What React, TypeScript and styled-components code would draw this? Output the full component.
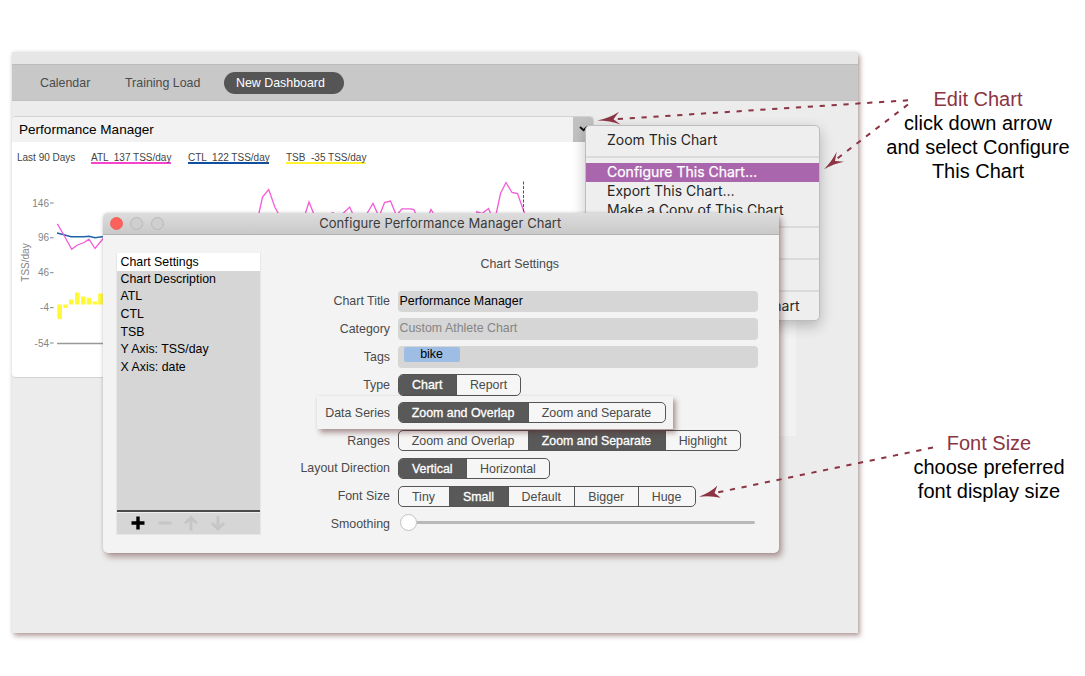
import React from "react";
import styled, { createGlobalStyle, css } from "styled-components";

const SANS = '"Liberation Sans", Arial, Helvetica, sans-serif';
const SYSTEM = 'Inter, Roboto, sans-serif';
const MAROON = "#8b3443";

const GlobalStyle = createGlobalStyle`
  * { box-sizing: border-box; }
  body { margin: 0; background: #fff; font-family: ${SANS}; color: #000; }
`;

const Page = styled.div`
  position: relative;
  display: flex;
  width: 1085px;
  height: 676px;
  padding: 52px 0 0 12px;
  overflow: hidden;
`;

const AppWindow = styled.div`
  display: flex;
  flex-direction: column;
  flex: none;
  width: 846px;
  height: 581px;
  background: #ececec;
  box-shadow: 2px 3px 5px rgba(85, 35, 35, 0.42), 0 0 4px rgba(0, 0, 0, 0.08);
`;

const WindowTop = styled.div`
  height: 12px;
  background: #e6e6e6;
`;

const TabBar = styled.nav`
  display: flex;
  align-items: center;
  height: 37px;
  padding-left: 28px;
  background: #c8c8c8;
  border-top: 1px solid #bcbcbc;
  border-bottom: 1px solid #c0c0c0;
  font-size: 12.4px;
  color: #4b4b4b;
`;

const Tab = styled.span<{ $width: number }>`
  width: ${(p) => p.$width}px;
  white-space: nowrap;
`;

const ActiveTab = styled.span`
  width: 120.5px;
  height: 22px;
  padding-left: 12.5px;
  border-radius: 11px;
  background: #555;
  color: #fff;
  line-height: 22px;
  white-space: nowrap;
`;

const Panels = styled.div`
  display: flex;
  align-items: flex-start;
  padding-top: 15px;
`;

const ChartPanel = styled.section`
  width: 582px;
  height: 261.5px;
  background: #fff;
  border: 1px solid #d2d2d2;
  border-left: 0;
  border-radius: 4px;
  overflow: hidden;
`;

const NextPanel = styled.section`
  width: 201.5px;
  height: 170px;
  margin-top: 150px;
  background: #f2f2f2;
`;

const PanelHeader = styled.header`
  display: flex;
  justify-content: space-between;
  height: 24.5px;
  background: #f2f2f2;
  font-size: 13.55px;
  line-height: 26px;
  padding-left: 7px;
`;

const MenuButton = styled.span`
  display: flex;
  align-items: center;
  justify-content: center;
  width: 20px;
  background: #c1c1c1;
`;

const Legend = styled.div`
  display: flex;
  height: 27px;
  padding: 9px 0 0 5px;
  font-size: 10px;
  line-height: 14px;
  color: #444;
  white-space: pre;
`;

const LegendItem = styled.span<{ $width: number; $color?: string; $gap?: number }>`
  width: ${(p) => p.$width}px;
  height: 13.5px;
  margin-right: ${(p) => p.$gap ?? 17}px;
  border-bottom: 2px solid ${(p) => p.$color ?? "transparent"};
`;

const ContextMenu = styled.div`
  position: absolute;
  left: 585px;
  top: 125px;
  width: 234.5px;
  height: 196px;
  padding-top: 5px;
  background: #eee;
  border: 1px solid #bdbdbd;
  border-radius: 5px;
  box-shadow: 0 5px 14px rgba(0, 0, 0, 0.24);
  font-family: ${SYSTEM};
  font-size: 14px;
  color: #262626;
`;

const MenuItem = styled.div<{ $active?: boolean; $end?: boolean; $spacing?: number }>`
  display: flex;
  justify-content: ${(p) => (p.$end ? "flex-end" : "flex-start")};
  height: 19.3px;
  padding: 0 19px 0 21px;
  line-height: 17.3px;
  letter-spacing: ${(p) => p.$spacing ?? 0}px;
  white-space: nowrap;
  ${(p) => p.$active && css`background: #aa66ac; color: #fff; -webkit-text-stroke: 0.25px #fff;`}
`;

const Separator = styled.div`
  height: 2px;
  margin: 5.4px 0 5.1px;
  background: #dadada;
`;

const Dialog = styled.div`
  position: absolute;
  left: 103px;
  top: 213px;
  width: 676px;
  height: 340px;
  background: #f3f3f3;
  border-radius: 5px;
  box-shadow: 3px 4px 6px rgba(85, 35, 35, 0.42), 0 0 3px rgba(0, 0, 0, 0.15);
`;

const TitleBar = styled.header`
  display: flex;
  align-items: center;
  gap: 7.4px;
  height: 22px;
  padding-left: 7px;
  border-radius: 5px 5px 0 0;
  background: linear-gradient(#dddddd, #c9c9c9);
  border-bottom: 1px solid #b2b2b2;
`;

const Light = styled.span<{ $close?: boolean }>`
  flex: none;
  width: 13px;
  height: 13px;
  border-radius: 50%;
  background: ${(p) => (p.$close ? "#fc625b" : "#cfcfcf")};
  border: 1px solid ${(p) => (p.$close ? "#f3625c" : "#b9b9b9")};
`;

const DialogTitle = styled.h1`
  margin: 0 0 0 148px;
  font: 400 13px/21px ${SYSTEM};
  letter-spacing: 0.07px;
  color: #3b3b3b;
  white-space: nowrap;
`;

const DialogBody = styled.div`
  display: flex;
`;

const Sidebar = styled.aside`
  display: flex;
  flex-direction: column;
  flex: none;
  width: 144.5px;
  height: 282px;
  margin: 17.5px 0 0 13px;
  background: #d6d6d6;
  border: 1px solid #e6e6e6;
  border-top: 0;
  font-size: 12.35px;
`;

const SidebarItem = styled.div<{ $selected?: boolean }>`
  height: 17.55px;
  padding-left: 3.5px;
  line-height: 17.2px;
  white-space: nowrap;
  ${(p) => p.$selected && css`height: 18.4px; line-height: 18.6px; background: #fff;`}
`;

const SidebarTools = styled.div`
  display: flex;
  align-items: center;
  gap: 8.6px;
  height: 23.5px;
  margin-top: auto;
  padding-left: 12px;
  border-top: 2px solid #4a4a4c;
  box-shadow: inset 0 1px #eee;
`;

const Form = styled.div`
  display: flex;
  flex-direction: column;
  flex: none;
  gap: 5.85px;
  width: 500px;
  padding-top: 19px;
  font-size: 12.4px;
  color: #4a4a4a;
`;

const FormHeading = styled.h2`
  height: 22px;
  margin: 0 0 8.5px 220px;
  font: 400 12.4px/20px ${SANS};
`;

const FieldRow = styled.div<{ $raised?: boolean }>`
  display: flex;
  align-items: center;
  height: 22px;
  padding-left: 29px;
  white-space: nowrap;
  ${(p) => p.$raised && css`
    position: relative;
    width: 356px;
    height: 33px;
    margin: -5.5px 0 -5.5px 56.5px;
    padding-left: 0;
    background: #f3f3f3;
    box-shadow: 3px 4px 5px rgba(85, 35, 35, 0.42), 0 0 3px rgba(0, 0, 0, 0.08);
  `}
`;

const FieldLabel = styled.label<{ $width?: number }>`
  flex: none;
  width: ${(p) => p.$width ?? 100.5}px;
  margin-right: 7.5px;
  text-align: right;
`;

const Field = styled.div<{ $muted?: boolean }>`
  display: flex;
  flex: none;
  width: 360px;
  height: 21.5px;
  padding-left: 2px;
  background: #d6d6d6;
  border-radius: 4px;
  line-height: 21px;
  color: ${(p) => (p.$muted ? "#858585" : "#000")};
`;

const Tag = styled.span`
  width: 56px;
  height: 15px;
  margin: 0.5px 0 0 4px;
  border-radius: 2px;
  background: #9dbde4;
  line-height: 15px;
  text-align: center;
`;

const Segments = styled.div`
  display: flex;
  flex: none;
  height: 21.5px;
  border: 1px solid #555;
  border-radius: 5px;
  overflow: hidden;
  background: #f6f6f6;
`;

const Segment = styled.span<{ $width: number; $on?: boolean }>`
  flex: none;
  width: ${(p) => p.$width}px;
  line-height: 20px;
  text-align: center;
  & + & { border-left: 1px solid #555; }
  ${(p) => p.$on && css`background: #595959; color: #fff; -webkit-text-stroke: 0.3px #fff;`}
`;

const Slider = styled.div`
  display: flex;
  align-items: center;
  flex: none;
  width: 360px;
  padding: 0 3px 3px 2px;
`;

const Knob = styled.span`
  flex: none;
  width: 17px;
  height: 17px;
  border-radius: 50%;
  background: #fff;
  border: 1px solid #c2c2c2;
`;

const Track = styled.span`
  flex: 1;
  height: 3px;
  border-radius: 0 2px 2px 0;
  background: #b8b8b8;
`;

const Notes = styled.aside`
  display: flex;
  flex-direction: column;
  width: 227px;
  padding: 35px 0 0 13px;
  gap: 248px;
  font-size: 20px;
  line-height: 24px;
  text-align: center;
`;

const Note = styled.p<{ $shift?: number }>`
  margin: 0;
  padding-left: ${(p) => p.$shift ?? 0}px;
  white-space: pre-line;
`;

const NoteTitle = styled.span`
  color: ${MAROON};
`;

const Arrows = styled.svg`
  position: absolute;
  left: 0;
  top: 0;
`;

const ChartSvg = styled.svg`
  display: block;
`;

const bars = [
  [57.3, 304, 14.7], [63.3, 304, 3.4], [69, 299, 5], [75, 292, 12],
  [81, 296, 8], [86.7, 297.4, 6.6], [92.7, 301, 3], [98.2, 293, 11],
];

const ticks: [string, number][] = [
  ["146", 202.5], ["96", 237.3], ["46", 272.2], ["-4", 307.2], ["-54", 342.5],
];

const sections = ["Chart Settings", "Chart Description", "ATL", "CTL", "TSB", "Y Axis: TSS/day", "X Axis: date"];

type Option = [string, number, boolean?];
const choices: { label: string; raised?: boolean; options: Option[] }[] = [
  { label: "Type", options: [["Chart", 57.5, true], ["Report", 64]] },
  { label: "Data Series", raised: true, options: [["Zoom and Overlap", 129, true], ["Zoom and Separate", 137]] },
  { label: "Ranges", options: [["Zoom and Overlap", 129], ["Zoom and Separate", 137, true], ["Highlight", 75.5]] },
  { label: "Layout Direction", options: [["Vertical", 67.5, true], ["Horizontal", 83]] },
  { label: "Font Size", options: [["Tiny", 50], ["Small", 59, true], ["Default", 66.5], ["Bigger", 63.5], ["Huge", 57]] },
];

function PerformanceChart() {
  return (
    <ChartSvg width="582" height="209" viewBox="12 168.5 582 209">
      <g fontFamily={SANS} fontSize="10" fill="#858585">
        {ticks.map(([label, y]) => (
          <g key={label}>
            <text x="49" y={y + 3.6} textAnchor="end">{label}</text>
            <path d={`M50 ${y}h3.6`} stroke="#858585" />
          </g>
        ))}
        <text transform="translate(29.3 262) rotate(-90)" textAnchor="middle">TSS/day</text>
      </g>
      <path d="M57 343H110" stroke="#999" strokeWidth="1.5" />
      {bars.map(([x, y, h]) => (
        <rect key={x} x={x} y={y} width="4.6" height={h} fill="#fff935" />
      ))}
      <path d="M57 232.5 63 234 71 236.3H84L89 235.7 95 237.3 104 236" fill="none" stroke="#1f63ab" strokeWidth="1.5" />
      <path
        d="M57.3 223.3 63 233 71.7 248.7 77 244.7 84 242 89 238.7 95 248 104 237 M258.7 214 262.5 196.5 268.7 189 275 207 279 214 M305 214 309 201.5 314 214 M328 214 333 212.3 335 214 M343 213 349.7 206.5 353 214 M367 213 373 203 378 214 M380 214 384.5 202 390.5 200.5 396 214 M398 213 402 208.3H411L414 209.3 416 214 M429 214 431 209 434 214 M476 214 477 211 482 213 488.5 208 491 214 M496 214 500.5 193 506 182 512 192 517.5 193 525 214"
        fill="none" stroke="#f55ad7" strokeWidth="1.3"
      />
      <path d="M523.5 181V214" stroke="#555" strokeDasharray="3 1.5" />
    </ChartSvg>
  );
}

export default function App() {
  return (
    <>
      <GlobalStyle />
      <Page>
        <AppWindow>
          <WindowTop />
          <TabBar>
            <Tab $width={85}>Calendar</Tab>
            <Tab $width={98.5}>Training Load</Tab>
            <ActiveTab>New Dashboard</ActiveTab>
          </TabBar>
          <Panels>
            <ChartPanel>
              <PanelHeader>
                Performance Manager
                <MenuButton>
                  <svg width="9" height="6" viewBox="0 0 9 6" fill="none" stroke="#111" strokeWidth="1.9">
                    <path d="M1 1 4.5 4.3 8 1" />
                  </svg>
                </MenuButton>
              </PanelHeader>
              <Legend>
                <LegendItem $width={58} $gap={16}>Last 90 Days</LegendItem>
                <LegendItem $width={80} $color="#f744cf">ATL  137 TSS/day</LegendItem>
                <LegendItem $width={81} $color="#0f4fa0">CTL  122 TSS/day</LegendItem>
                <LegendItem $width={80} $color="#fff32e">TSB  -35 TSS/day</LegendItem>
              </Legend>
              <PerformanceChart />
            </ChartPanel>
            <NextPanel />
          </Panels>
        </AppWindow>

        <Notes>
          <Note>
            <NoteTitle>Edit Chart</NoteTitle>
            {"\nclick down arrow\nand select Configure\nThis Chart"}
          </Note>
          <Note $shift={22}>
            <NoteTitle>Font Size</NoteTitle>
            {"\nchoose preferred\nfont display size"}
          </Note>
        </Notes>

        <ContextMenu>
          <MenuItem>Zoom This Chart</MenuItem>
          <Separator />
          <MenuItem $active>Configure This Chart…</MenuItem>
          <MenuItem>Export This Chart…</MenuItem>
          <MenuItem>Make a Copy of This Chart</MenuItem>
          <Separator />
          <MenuItem />
          <Separator />
          <MenuItem />
          <Separator />
          <MenuItem $end>Chart</MenuItem>
        </ContextMenu>

        <Dialog>
          <TitleBar>
            <Light $close />
            <Light />
            <Light />
            <DialogTitle>Configure Performance Manager Chart</DialogTitle>
          </TitleBar>
          <DialogBody>
            <Sidebar>
              {sections.map((name, i) => (
                <SidebarItem key={name} $selected={i === 0}>{name}</SidebarItem>
              ))}
              <SidebarTools>
                <svg width="18" height="18" viewBox="0 0 18 18" stroke="#000" strokeWidth="3.4"><path d="M2.5 9h13M9 2.5v13" /></svg>
                <svg width="18" height="18" viewBox="0 0 18 18" stroke="#c6c6c6" strokeWidth="3.2"><path d="M2.5 9h13" /></svg>
                <svg width="18" height="18" viewBox="0 0 18 18" stroke="#c6c6c6" strokeWidth="3" fill="none"><path d="M9 16.5V4M3 9.5 9 3.5 15 9.5" /></svg>
                <svg width="18" height="18" viewBox="0 0 18 18" stroke="#c6c6c6" strokeWidth="3" fill="none"><path d="M9 2v12.5M3 9 9 15 15 9" /></svg>
              </SidebarTools>
            </Sidebar>
            <Form>
              <FormHeading>Chart Settings</FormHeading>
              <FieldRow>
                <FieldLabel>Chart Title</FieldLabel>
                <Field>Performance Manager</Field>
              </FieldRow>
              <FieldRow>
                <FieldLabel>Category</FieldLabel>
                <Field $muted>Custom Athlete Chart</Field>
              </FieldRow>
              <FieldRow>
                <FieldLabel>Tags</FieldLabel>
                <Field><Tag>bike</Tag></Field>
              </FieldRow>
              {choices.map(({ label, raised, options }) => (
                <FieldRow key={label} $raised={raised}>
                  <FieldLabel $width={raised ? 73 : undefined}>{label}</FieldLabel>
                  <Segments>
                    {options.map(([name, width, on]) => (
                      <Segment key={name} $width={width} $on={on}>{name}</Segment>
                    ))}
                  </Segments>
                </FieldRow>
              ))}
              <FieldRow>
                <FieldLabel>Smoothing</FieldLabel>
                <Slider><Knob /><Track /></Slider>
              </FieldRow>
            </Form>
          </DialogBody>
        </Dialog>

        <Arrows width="1085" height="676" viewBox="0 0 1085 676">
          <g stroke={MAROON} strokeWidth="2" strokeDasharray="5.2 6.7">
            <path d="M908 100.3 614 119.3" />
            <path d="M908 104.5 834 161" />
            <path d="M933 447.5 715 493" />
          </g>
          <g fill={MAROON}>
            <path d="M597.3 120.5Q610 118 619 111.8L613.5 119.3 620.5 124.6Q610 120.5 597.3 120.5Z" />
            <path d="M824 169.3Q832 161 836.7 151.7L835 161 844 161.7Q834 163.5 824 169.3Z" />
            <path d="M699 496.7Q710 492.5 717.3 485.7L714.5 493 720.7 497.8Q711 495.5 699 496.7Z" />
          </g>
        </Arrows>
      </Page>
    </>
  );
}
